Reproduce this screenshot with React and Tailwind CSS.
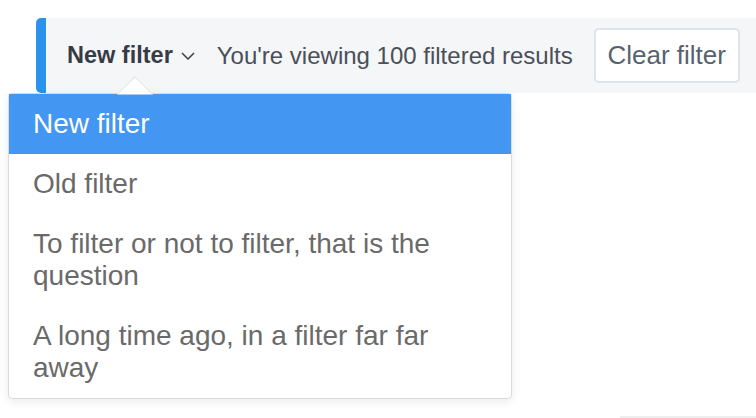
import { useState } from "react";

const options = [
  "New filter",
  "Old filter",
  "To filter or not to filter, that is the question",
  "A long time ago, in a filter far far away",
];

const Chevron = () => (
  <svg width="14" height="8" viewBox="0 0 14 8" className="text-[#3a3f48]">
    <path d="M1 1l6 6 6-6" fill="none" stroke="currentColor" strokeWidth="1.5" />
  </svg>
);

export default function App() {
  const [selected, setSelected] = useState(0);

  return (
    <div className="relative flex h-[418px] w-full flex-col bg-white font-['Liberation_Sans',Arial,sans-serif]">
      {/* filter bar */}
      <div className="ml-[36px] mt-[18px] flex h-[75px] items-center rounded-l-[5px] border-l-[10px] border-[#2b93ec] bg-[#f5f6f8] pl-[21px]">
        <button className="flex items-center gap-[8px] text-[23.5px] font-bold text-[#363b45]">
          New filter
          <Chevron />
        </button>
        <span className="ml-[22px] text-[24px] text-[#4a4f58]">
          You're viewing 100 filtered results
        </span>
        <button className="ml-[21px] h-[55px] w-[146px] rounded-[5px] border-2 border-[#dde4ec] bg-white text-[26px] text-[#576270]">
          Clear filter
        </button>
      </div>

      <div className="flex-1" />
      <div className="ml-[620px] h-[2px] bg-[#eeeeee]" />

      {/* dropdown menu */}
      <svg
        width="38"
        height="19"
        viewBox="0 0 38 19"
        className="absolute left-[116px] top-[76px] z-20"
      >
        <path d="M1 18.5L19 0.8 37 18.5" fill="white" stroke="#dcdcdc" strokeWidth="1" />
      </svg>
      <div className="absolute left-[8px] top-[93px] z-10 w-[504px] rounded-[4px] border border-[#dadada] bg-white shadow-[0_3px_10px_rgba(0,0,0,0.08)]">
        {options.map((opt, i) => (
          <div
            key={opt}
            onClick={() => setSelected(i)}
            className={
              i === selected
                ? "bg-[#4396f1] px-[24px] py-[14px] text-[28px] leading-[32px] text-white"
                : "px-[24px] py-[14px] text-[28px] leading-[32px] text-[#6a6a6a]"
            }
          >
            {opt}
          </div>
        ))}
      </div>
    </div>
  );
}
